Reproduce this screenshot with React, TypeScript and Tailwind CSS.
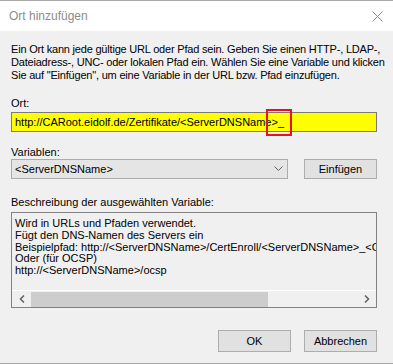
import React from 'react';

const FONT = "font-['Segoe_UI','Liberation_Sans',Arial,sans-serif]";

/** Schaltfläche im Windows-Stil */
function WinButton({ children, className = '' }: { children: React.ReactNode; className?: string }) {
  return (
    <div
      className={`w-[73px] flex items-center justify-center bg-[#e1e1e1] border border-[#adadad] text-[11px] ${className}`}
    >
      {children}
    </div>
  );
}

export default function App() {
  return (
    <div
      className={`w-[393px] h-[364px] bg-[#f0f0f0] border-t border-b border-[#a8a8a8] flex flex-col text-black overflow-hidden ${FONT}`}
    >
      {/* Titelleiste */}
      <div className="h-[30px] bg-white flex items-center justify-between pl-[9px] pr-[10px] shrink-0">
        <span className="text-[12px] text-[#8c8c8c]">Ort hinzufügen</span>
        <svg width="11" height="11" viewBox="0 0 11 11">
          <path d="M0.5 0.5 L10.5 10.5 M10.5 0.5 L0.5 10.5" stroke="#8a8a8a" strokeWidth="1" />
        </svg>
      </div>

      <div className="flex flex-col px-[11px] pr-[16px] pt-[12px] text-[11px]">
        <p className="leading-[13px] whitespace-nowrap tracking-[-0.2px]">
          Ein Ort kann jede gültige URL oder Pfad sein. Geben Sie einen HTTP-, LDAP-,
          <br />
          Dateiadress-, UNC- oder lokalen Pfad ein. Wählen Sie eine Variable und klicken
          <br />
          Sie auf "Einfügen", um eine Variable in der URL bzw. Pfad einzufügen.
        </p>

        <div className="mt-[15px] leading-[13px]">Ort:</div>
        <div className="relative mt-[2px] h-[20px] bg-[#ffff00] border border-[#7a7a7a] flex items-center pl-[3px]">
          <span>http://CARoot.eidolf.de/Zertifikate/&lt;ServerDNSName&gt;_</span>
          <div className="absolute left-[254px] top-[-4px] w-[26px] h-[27px] border-2 border-[#e81123]" />
        </div>

        <div className="mt-[14px] leading-[13px]">Variablen:</div>
        <div className="flex justify-between h-[20px]">
          <div className="w-[277px] bg-[#e5e5e5] border border-[#acacac] flex items-center justify-between pl-[3px] pr-[4px]">
            <span>&lt;ServerDNSName&gt;</span>
            <svg width="9" height="6" viewBox="0 0 9 6">
              <path d="M0.5 0.5 L4.5 4.5 L8.5 0.5" fill="none" stroke="#606060" strokeWidth="1" />
            </svg>
          </div>
          <WinButton>Einfügen</WinButton>
        </div>

        <div className="mt-[17px] leading-[13px]">Beschreibung der ausgewählten Variable:</div>
        <div className="mt-[3px] h-[96px] border border-[#828282] bg-[#f0f0f0] flex flex-col overflow-hidden">
          <div className="flex-1 pl-[3px] pt-[5px] leading-[11.75px] whitespace-nowrap overflow-hidden">
            Wird in URLs und Pfaden verwendet.
            <br />
            Fügt den DNS-Namen des Servers ein
            <br />
            Beispielpfad: http://&lt;ServerDNSName&gt;/CertEnroll/&lt;ServerDNSName&gt;_&lt;Ca
            <br />
            Oder (für OCSP)
            <br />
            http://&lt;ServerDNSName&gt;/ocsp
          </div>
          {/* horizontale Bildlaufleiste */}
          <div className="h-[17px] bg-[#f0f0f0] border-t border-white flex items-center shrink-0">
            <div className="w-[19px] flex items-center justify-center">
              <svg width="6" height="8" viewBox="0 0 6 8">
                <path d="M5 0.5 L1.5 4 L5 7.5" fill="none" stroke="#606060" strokeWidth="1.5" />
              </svg>
            </div>
            <div className="w-[237px] h-[15px] bg-[#cdcdcd]" />
            <div className="flex-1" />
            <div className="w-[19px] flex items-center justify-center">
              <svg width="6" height="8" viewBox="0 0 6 8">
                <path d="M1 0.5 L4.5 4 L1 7.5" fill="none" stroke="#606060" strokeWidth="1.5" />
              </svg>
            </div>
          </div>
        </div>

        <div className="mt-[22px] flex justify-end gap-[13px] h-[22px]">
          <WinButton>OK</WinButton>
          <WinButton>Abbrechen</WinButton>
        </div>
      </div>
    </div>
  );
}
